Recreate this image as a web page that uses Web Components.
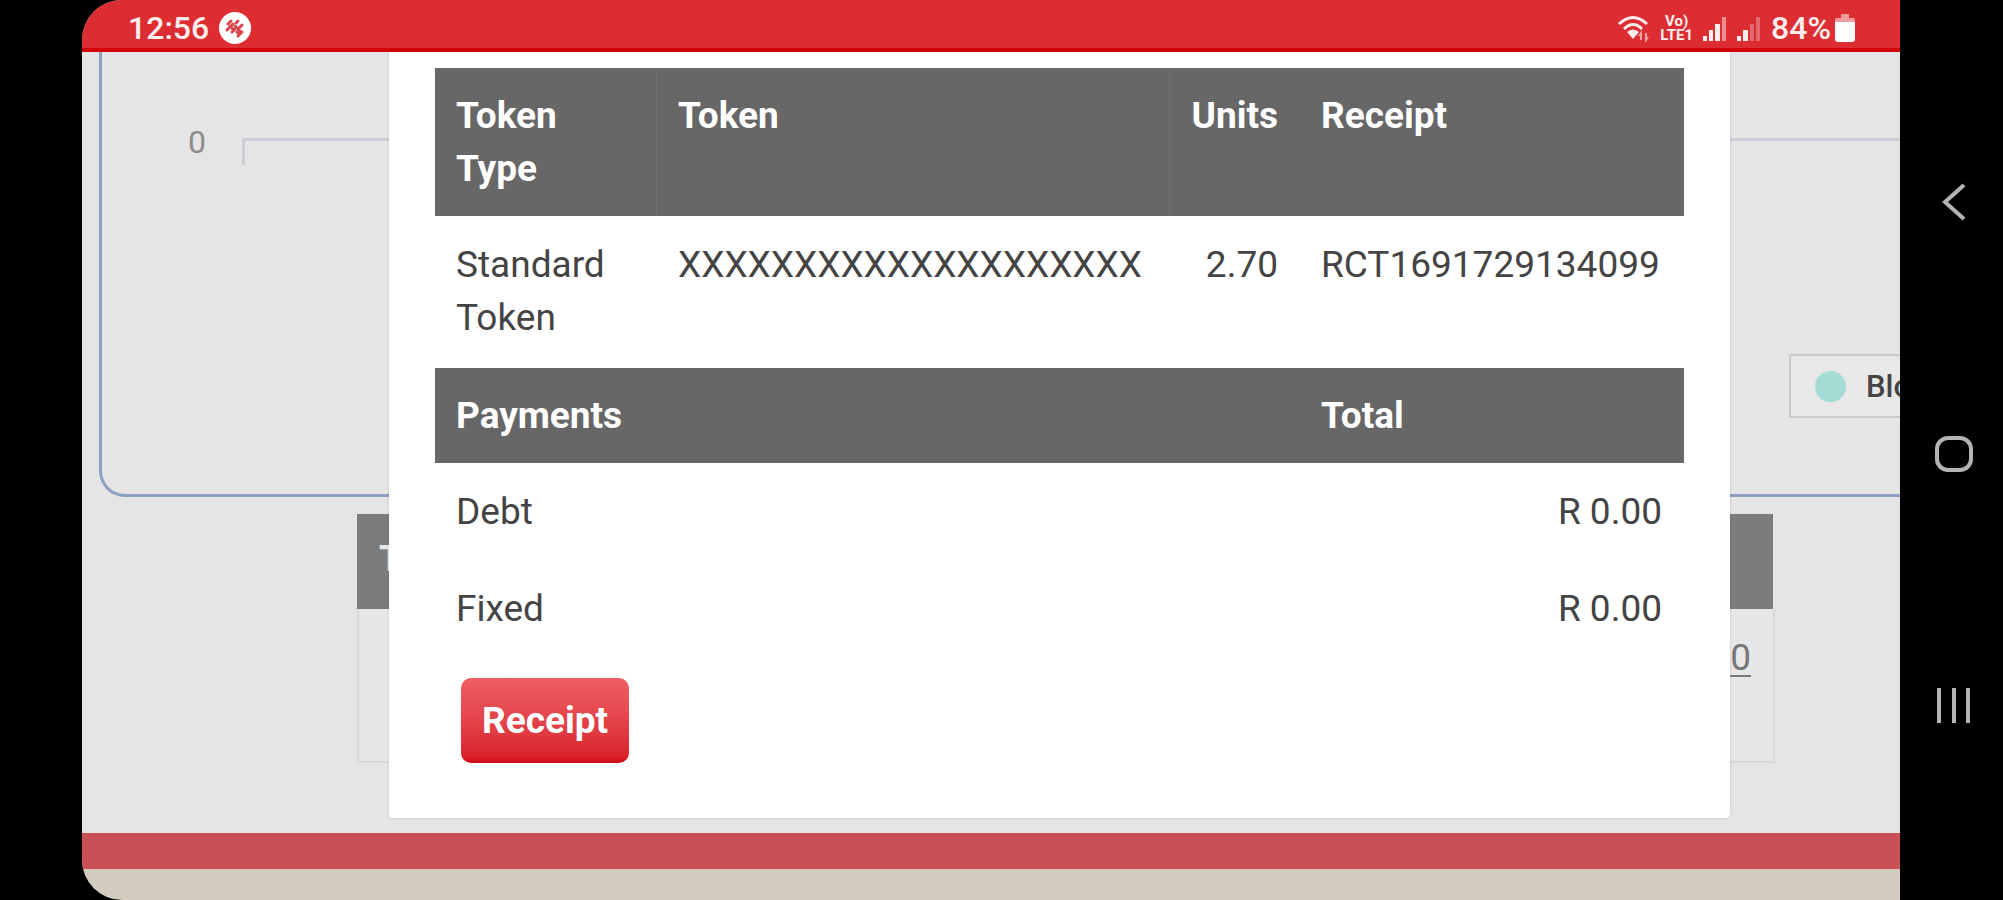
<!DOCTYPE html>
<html lang="en">
<head>
<meta charset="utf-8">
<meta name="viewport" content="width=device-width, initial-scale=1">
<title>Token receipt</title>
<style>
  body {
    margin: 0;
    background: #000;
    font-family: Roboto, "Liberation Sans", sans-serif;
  }
</style>
</head>
<body>
<phone-shell>
  <status-bar slot="status" time="12:56" battery="84%"></status-bar>
  <usage-chart></usage-chart>
  <history-table></history-table>
  <receipt-modal slot="modal">
    <red-button>Receipt</red-button>
  </receipt-modal>
  <nav-keys slot="keys"></nav-keys>
</phone-shell>

<script>
class BaseElement extends HTMLElement {
  constructor() {
    super();
    this.attachShadow({ mode: "open" });
  }

  connectedCallback() {
    this.render();
  }
}

class PhoneShell extends BaseElement {
  render() {
    this.shadowRoot.innerHTML = `
      <style>
        :host {
          display: flex;
          min-height: 100vh;
          padding-left: 82px;
          box-sizing: border-box;
          background: #000;
        }
        .screen {
          flex: 1;
          min-width: 0;
          display: flex;
          flex-direction: column;
          overflow: hidden;
          border-radius: 40px 0 0 40px;
          background: #d1ccbf;
        }
        main {
          flex: 1;
          position: relative;
          background: #e5e5e5;
        }
        .overlay {
          position: absolute;
          inset: 0 170px auto 307px;
        }
        .strip {
          height: 36px;
          margin-bottom: 31px;
          background: #c95055;
        }
      </style>
      <div class="screen">
        <slot name="status"></slot>
        <main>
          <slot></slot>
          <div class="overlay"><slot name="modal"></slot></div>
        </main>
        <div class="strip"></div>
      </div>
      <slot name="keys"></slot>
    `;
  }
}

class StatusBar extends BaseElement {
  render() {
    this.shadowRoot.innerHTML = `
      <style>
        :host {
          display: flex;
          align-items: center;
          justify-content: space-between;
          height: 52px;
          padding: 8px 45px 0 46px;
          box-sizing: border-box;
          border-bottom: 4px solid #d20409;
          background: #dc2d33;
          color: #fdeeee;
          font-size: 32px;
          line-height: 38px;
          font-weight: 500;
        }
        .group {
          display: flex;
          align-items: center;
          gap: 10px;
        }
        .volte {
          font-size: 15px;
          line-height: 14px;
          font-weight: 700;
          text-align: center;
        }
        .volte span {
          display: block;
        }
        .level {
          display: flex;
          align-items: center;
          gap: 4px;
        }
        svg {
          display: block;
        }
      </style>
      <div class="group">
        <span>${this.getAttribute("time")}</span>
        <svg width="32" height="32" viewBox="0 0 32 32">
          <circle cx="16" cy="16" r="16" fill="#fff"/>
          <g fill="none" stroke="#d8474c" stroke-width="3" stroke-linecap="round">
            <path d="M9 12l3-3M8 18l6-6M13 20l3-3M17 11l2-2M19 24l4-4M20 16l3-3"/>
            <path d="M11 14l4 4M16 14l6 6M18 20l2 2"/>
          </g>
        </svg>
      </div>
      <div class="group">
        <svg width="32" height="27" viewBox="0 0 32 27">
          <g fill="none" stroke="#fdeeee" stroke-width="3">
            <path d="M1 9Q15 -4 29 9"/>
            <path d="M6 14Q15 5 24 14"/>
          </g>
          <path d="M9 17Q15 12 21 17L15 24Z" fill="#fdeeee"/>
          <path d="M23 25v-7l-2 3M28 18v7l2-3" fill="none" stroke="#f0a0a3" stroke-width="2"/>
        </svg>
        <div class="volte"><span>Vo)</span><span>LTE1</span></div>
        <svg width="24" height="25" viewBox="0 0 24 25">
          <path d="M0 20h4v5h-4zM6 14h4v11h-4zM12 8h5v17h-5z" fill="#fdeeee"/>
          <path d="M19 1h4v24h-4z" fill="#eb8e91"/>
        </svg>
        <svg width="24" height="25" viewBox="0 0 24 25">
          <path d="M0 20h4v5h-4zM6 14h5v11h-5z" fill="#fdeeee"/>
          <path d="M13 8h4v17h-4zM19 1h4v24h-4z" fill="#e4696d"/>
        </svg>
        <div class="level">
          <span>${this.getAttribute("battery")}</span>
          <svg width="20" height="28" viewBox="0 0 20 28">
            <path d="M6 0h8v4h4q2 0 2 2v4h-20v-4q0-2 2-2h4z" fill="#ef9a9d"/>
            <path d="M0 8h20v17q0 3-3 3h-14q-3 0-3-3z" fill="#fff"/>
          </svg>
        </div>
      </div>
    `;
  }
}

class UsageChart extends BaseElement {
  render() {
    this.shadowRoot.innerHTML = `
      <style>
        :host {
          display: flex;
          flex-direction: column;
          margin: 0 -20px 0 17px;
          padding: 71px 0 76px 86px;
          border: solid #8d9fc3;
          border-width: 0 0 3px 3px;
          border-radius: 0 0 0 26px;
        }
        .axis {
          display: flex;
          gap: 36px;
          color: #8c8c8c;
          font-size: 32px;
          line-height: 38px;
        }
        .line {
          flex: 1;
          height: 24px;
          margin-top: 15px;
          border: solid #cbced6;
          border-width: 3px 0 0 3px;
        }
        .legend {
          display: flex;
          align-items: center;
          align-self: flex-end;
          gap: 20px;
          width: 131px;
          height: 64px;
          margin-top: 189px;
          padding-left: 24px;
          box-sizing: border-box;
          border: 2px solid #c9c9c9;
          background: #e8e8e8;
          color: #444;
          font-size: 31px;
          font-weight: 500;
        }
        .dot {
          width: 31px;
          height: 31px;
          border-radius: 50%;
          background: #a3dbd5;
        }
      </style>
      <div class="axis"><span>0</span><div class="line"></div></div>
      <div class="legend"><span class="dot"></span><span>Blo</span></div>
    `;
  }
}

class HistoryTable extends BaseElement {
  render() {
    this.shadowRoot.innerHTML = `
      <style>
        :host {
          display: block;
          margin: 17px 125px 68px 275px;
          font-size: 37px;
          line-height: 53px;
        }
        table {
          width: 100%;
          border-collapse: separate;
          border-spacing: 0;
        }
        th {
          padding: 18px 22px 24px;
          background: #7c7c7c;
          color: #e8e8e8;
          text-align: left;
          border-right: 2px solid #e5e5e5;
        }
        td {
          height: 110px;
          padding: 22px 22px 20px;
          border: 2px solid #d8d8d8;
          border-top: 0;
          background: #e7e7e7;
          text-align: right;
          vertical-align: top;
        }
        a {
          color: #777;
          text-underline-offset: 5px;
          text-decoration-thickness: 2px;
        }
      </style>
      <table>
        <thead><tr><th>T</th></tr></thead>
        <tbody><tr><td><a href="#">0</a></td></tr></tbody>
      </table>
    `;
  }
}

class ReceiptModal extends BaseElement {
  render() {
    this.shadowRoot.innerHTML = `
      <style>
        :host {
          display: block;
          padding: 16px 46px 55px;
          border-radius: 0 0 4px 4px;
          background: #fff;
          box-shadow: 0 0 3px rgba(0, 0, 0, 0.15);
          color: #444;
          font-size: 37px;
          line-height: 53px;
        }
        table {
          width: 100%;
          table-layout: fixed;
          border-collapse: separate;
          border-spacing: 0;
        }
        .type { width: 222px; }
        .units { width: 130px; }
        .receipt { width: 384px; }
        th, td {
          padding: 21px 22px 21px 21px;
          text-align: left;
          vertical-align: top;
        }
        th {
          background: #676767;
          color: #fff;
          font-weight: 700;
        }
        .split {
          box-shadow: inset -1px 0 #707070;
        }
        td {
          padding-top: 22px;
          padding-bottom: 22px;
        }
        .tokens td {
          padding-bottom: 24px;
        }
        .num {
          text-align: right;
        }
        footer {
          padding: 21px 0 0 26px;
        }
      </style>
      <table>
        <colgroup><col class="type"><col><col class="units"><col class="receipt"></colgroup>
        <tbody class="tokens">
          <tr><th class="split">Token Type</th><th class="split">Token</th><th class="num">Units</th><th>Receipt</th></tr>
          <tr><td>Standard Token</td><td>XXXXXXXXXXXXXXXXXXXX</td><td class="num">2.70</td><td>RCT1691729134099</td></tr>
        </tbody>
        <tbody>
          <tr><th colspan="3">Payments</th><th>Total</th></tr>
          <tr><td colspan="3">Debt</td><td class="num">R 0.00</td></tr>
          <tr><td colspan="3">Fixed</td><td class="num">R 0.00</td></tr>
        </tbody>
      </table>
      <footer><slot></slot></footer>
    `;
  }
}

class RedButton extends BaseElement {
  render() {
    this.shadowRoot.innerHTML = `
      <style>
        :host {
          display: inline-flex;
          vertical-align: top;
        }
        button {
          padding: 16px 21px;
          border: 0;
          border-radius: 10px;
          background: linear-gradient(#ee5f64, #e03a41 65%, #d9222a 92%, #cf0a14);
          color: #fff;
          font: 700 37px/53px Roboto, "Liberation Sans", sans-serif;
          cursor: pointer;
        }
      </style>
      <button type="button"><slot></slot></button>
    `;
  }
}

class NavKeys extends BaseElement {
  render() {
    this.shadowRoot.innerHTML = `
      <style>
        :host {
          display: flex;
          flex-direction: column;
          align-items: center;
          justify-content: center;
          gap: 212px;
          width: 103px;
          padding: 8px 0 0 4px;
          box-sizing: border-box;
        }
        button {
          padding: 0;
          border: 0;
          background: none;
          cursor: pointer;
        }
        svg {
          display: block;
          fill: none;
          stroke: #b4b4b4;
          stroke-width: 4;
        }
      </style>
      <button type="button" aria-label="Back">
        <svg width="40" height="40" viewBox="0 0 40 40"><path d="M30 3L11 20L30 37"/></svg>
      </button>
      <button type="button" aria-label="Home">
        <svg width="40" height="40" viewBox="0 0 40 40"><rect x="3" y="4" width="34" height="32" rx="11"/></svg>
      </button>
      <button type="button" aria-label="Recents">
        <svg width="40" height="40" viewBox="0 0 40 40"><path d="M5 2v35M20 2v35M34 2v35"/></svg>
      </button>
    `;
  }
}

customElements.define("phone-shell", PhoneShell);
customElements.define("status-bar", StatusBar);
customElements.define("usage-chart", UsageChart);
customElements.define("history-table", HistoryTable);
customElements.define("receipt-modal", ReceiptModal);
customElements.define("red-button", RedButton);
customElements.define("nav-keys", NavKeys);
</script>
</body>
</html>
